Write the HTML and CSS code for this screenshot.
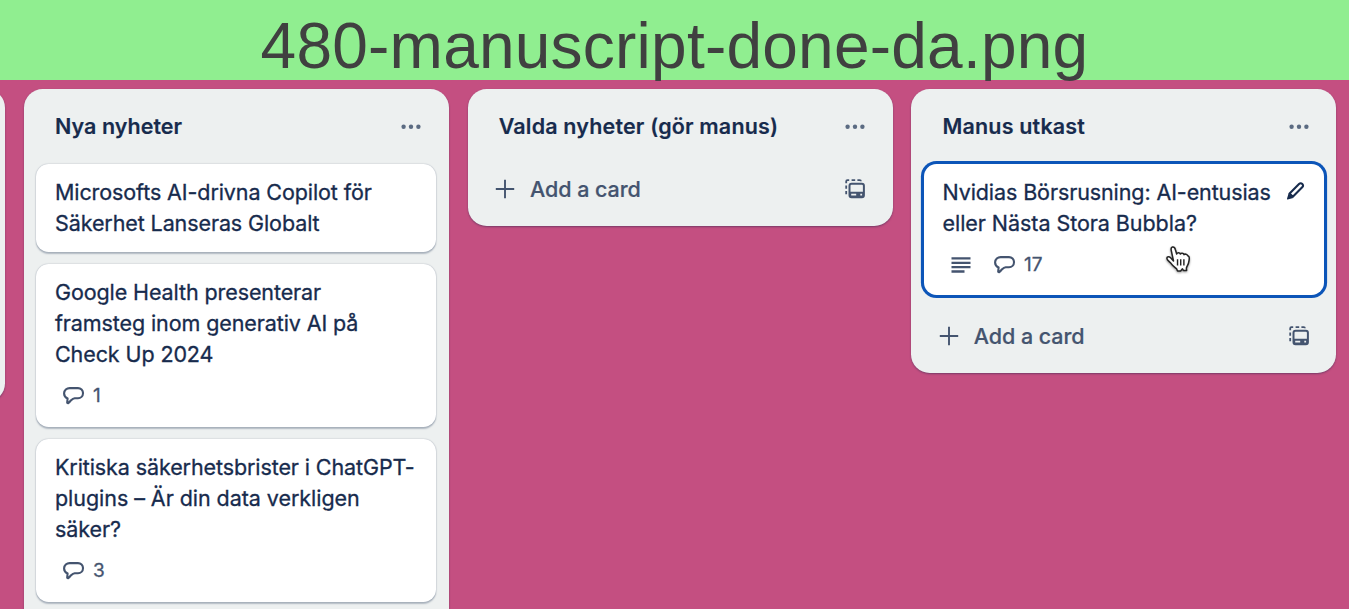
FILE: index.html
```html
<!DOCTYPE html>
<html lang="sv">
<head>
<meta charset="utf-8">
<title>480-manuscript-done-da.png</title>
<link rel="stylesheet" href="styles.css">
</head>
<body>
<svg class="defs" width="0" height="0">
  <symbol id="dots" viewBox="0 0 20 6"><circle cx="2.6" cy="2.700" r="2.200"/><circle cx="10" cy="2.700" r="2.200"/><circle cx="17.400" cy="2.700" r="2.200"/></symbol>
  <symbol id="plus" viewBox="0 0 20 20"><path d="M10 .8v18.4M.8 10h18.4" fill="none" stroke="currentColor" stroke-width="1.9"/></symbol>
  <symbol id="template" viewBox="0 0 20 20">
    <path d="M1.2 4.2V2.4q0-1.2 1.2-1.2h1.8M6.6 1.2h3.6M12.4 1.2h2.3q1.2 0 1.2 1M1.2 6.5v3.2M1.2 12v3.2" fill="none" stroke="currentColor" stroke-width="1.8"/>
    <rect x="4.5" y="4.7" width="14.4" height="13.500" rx="2" fill="none" stroke="currentColor" stroke-width="2"/>
    <path d="M4.5 12.700h14.4v3.400q0 2-2 2H6.5q-2 0-2-2z"/>
    <path d="M6.2 14.700h5v1.800h-5zM15.300 14.700h1.800v1.800h-1.800z" class="cut"/>
  </symbol>
  <symbol id="comment" viewBox="0 0 22 18"><path d="M7 1.100h8a5 5 0 0 1 5 5.100 5 5 0 0 1-5 5h-3.300c-1.900.2-2.800 1.200-3.700 2.100-.9 1-1.600 1.900-2.500 2.600-.6.500-1.400.2-1.300-.6l.4-3.800C2.400 10.500 1.100 8.800 1.100 6.500A5.600 5.300 0 0 1 7 1.100z" fill="none" stroke="currentColor" stroke-width="2.100" stroke-linejoin="round"/></symbol>
  <symbol id="lines" viewBox="0 0 20 16"><path d="M.5 1.400h19M.5 5.800h19M.5 10.200h19M.5 14.500h13" fill="none" stroke="currentColor" stroke-width="2.300"/></symbol>
</svg>
<header class="banner">480-manuscript-done-da.png</header>
<main class="board">
  <section class="list list-previous"></section>
  <section class="list list-news">
    <div class="list-head"><h2>Nya nyheter</h2><svg class="dots"><use href="#dots"/></svg></div>
    <div class="cards">
      <article class="card">
        <p><span>Microsofts AI-drivna Copilot för</span><span>Säkerhet Lanseras Globalt</span></p>
      </article>
      <article class="card">
        <p><span>Google Health presenterar</span><span>framsteg inom generativ AI på</span><span>Check Up 2024</span></p>
        <div class="badges"><svg class="comment"><use href="#comment"/></svg><b>1</b></div>
      </article>
      <article class="card">
        <p><span>Kritiska säkerhetsbrister i ChatGPT-</span><span class="loose">plugins – Är din data verkligen</span><span class="loose">säker?</span></p>
        <div class="badges"><svg class="comment"><use href="#comment"/></svg><b>3</b></div>
      </article>
    </div>
  </section>
  <section class="list">
    <div class="list-head"><h2 class="wide">Valda nyheter (gör manus)</h2><svg class="dots"><use href="#dots"/></svg></div>
    <div class="add"><svg class="plus"><use href="#plus"/></svg><span>Add a card</span><svg class="template"><use href="#template"/></svg></div>
  </section>
  <section class="list">
    <div class="list-head"><h2 class="wide">Manus utkast</h2><svg class="dots"><use href="#dots"/></svg></div>
    <div class="cards">
      <article class="card card-focus">
        <p><span>Nvidias Börsrusning: AI-entusias</span><span class="loose">eller Nästa Stora Bubbla?</span></p>
        <div class="badges"><svg class="lines"><use href="#lines"/></svg><svg class="comment"><use href="#comment"/></svg><b>17</b></div>
        <svg class="pencil" viewBox="0 0 20 20"><path d="M3.600 12.500 13 3.100q1.700-1.700 3.300-.1 1.600 1.600-.1 3.300L6.800 15.700z" fill="none" stroke="currentColor" stroke-width="2.100" stroke-linejoin="round"/><path d="M2.600 12.300 7.300 17 1.600 18.500q-.8.100-.6-.7z" fill="currentColor"/></svg>
        <svg class="hand" viewBox="0 0 26 28"><path d="M7.800 15.500 5.600 5.300C5 2.900 5.100 1.500 6.600 1.100c1.700-.4 2.700.8 3.200 2.700l1.300 4.400c.5-1.500 3.300-1.500 3.800.1.700-1.200 3.300-1 3.800.6 1-1 3.200-.4 3.800 1l1.100.8c1 .8.600 2.700.4 4.100-.3 2.300-.8 4.400-2 6.100l-.8 1.900.2 2.700-3.300-.1-1-1.700-1.900 2.200-3.200.1-1-2.400C9.900 22.500 7 20.700 5.600 18.500 4.500 16.700.900 14.800.9 12.600c.2-1.900 2.600-1.600 3.900-.4z" fill="#fff" stroke="#252525" stroke-width="1.600" stroke-linejoin="round"/><path d="M12 13.800v6.500M15.300 13.800v6.500M18.600 13.800v6.500" stroke="#252525" stroke-width="1.500"/></svg>
      </article>
    </div>
    <div class="add"><svg class="plus"><use href="#plus"/></svg><span>Add a card</span><svg class="template"><use href="#template"/></svg></div>
  </section>
</main>
</body>
</html>
```
FILE: styles.css
```css
* { box-sizing: border-box; }
body { margin: 0; width: 1349px; height: 609px; overflow: hidden; background: #c44f81; font-family: Inter, "Liberation Sans", sans-serif; color: #172b4d; display: flex; flex-direction: column; }
.defs { position: absolute; }
svg { display: block; flex: none; fill: currentColor; }
.banner { flex: none; height: 80px; position: relative; z-index: 1; background: #90ee90; color: #404040; font: 64px/92px "Liberation Sans", Arial, sans-serif; letter-spacing: .23px; text-align: center; white-space: nowrap; }
.board { flex: none; height: 529px; padding-top: 9px; display: flex; align-items: flex-start; gap: 18.75px; overflow: hidden; }
.list { flex: none; width: 425px; padding-bottom: 12px; border-radius: 18.75px; background: #edf0f0; box-shadow: 0 1px 2px rgba(9, 30, 66, .4); }
.list-previous { margin-left: -420px; height: 313px; }
.list-news { height: 560px; }
.list-head { height: 75px; padding: 0 27.5px 0 31.25px; display: flex; align-items: center; justify-content: space-between; }
h2 { margin: 0; font-size: 21.5px; font-weight: 600; line-height: 31px; letter-spacing: .04px; white-space: nowrap; -webkit-text-stroke: .15px currentColor; }
.wide { letter-spacing: .17px; }
.dots { width: 20px; height: 6px; color: #5b6b82; }
.cards { padding: 0 12.5px; display: flex; flex-direction: column; gap: 12.5px; }
.card { position: relative; border-radius: 12.5px; background: #fff; padding: 12.5px 18.75px; box-shadow: 0 1.5px 1.5px rgba(9, 30, 66, .25), 0 0 1.5px rgba(9, 30, 66, .3); }
.card-focus { box-shadow: 0 0 0 3.1px #0c55b8; margin-bottom: 15.75px; }
.card p { margin: 0; font-size: 21.5px; line-height: 31.25px; letter-spacing: -.1px; white-space: nowrap; -webkit-text-stroke: .3px currentColor; }
.card p span { display: block; width: max-content; }
.card p .loose { letter-spacing: -.05px; }
.badges { height: 43.75px; padding: 7.5px 0 0 8px; display: flex; align-items: center; color: #44546f; }
.comment { width: 22px; height: 18px; }
.badges b { margin-left: 8px; font-size: 19px; font-weight: 400; line-height: 25px; -webkit-text-stroke: .3px currentColor; }
.lines { width: 20px; height: 16px; margin-right: 23.5px; }
.add { height: 50px; padding: 0 27.5px; display: flex; align-items: center; color: #44546f; }
.plus { width: 20px; height: 20px; }
.add span { margin-left: 15px; font-size: 21.5px; font-weight: 500; letter-spacing: -.05px; -webkit-text-stroke: .2px currentColor; }
.template { width: 20px; height: 20px; margin-left: auto; }
.cut { fill: #edf0f0; }
.pencil { position: absolute; left: 362.5px; top: 17px; width: 20px; height: 20px; }
.hand { position: absolute; left: 242px; top: 82px; width: 25px; height: 27px; filter: drop-shadow(0 1px 1px rgba(0, 0, 0, .4)); }
```
